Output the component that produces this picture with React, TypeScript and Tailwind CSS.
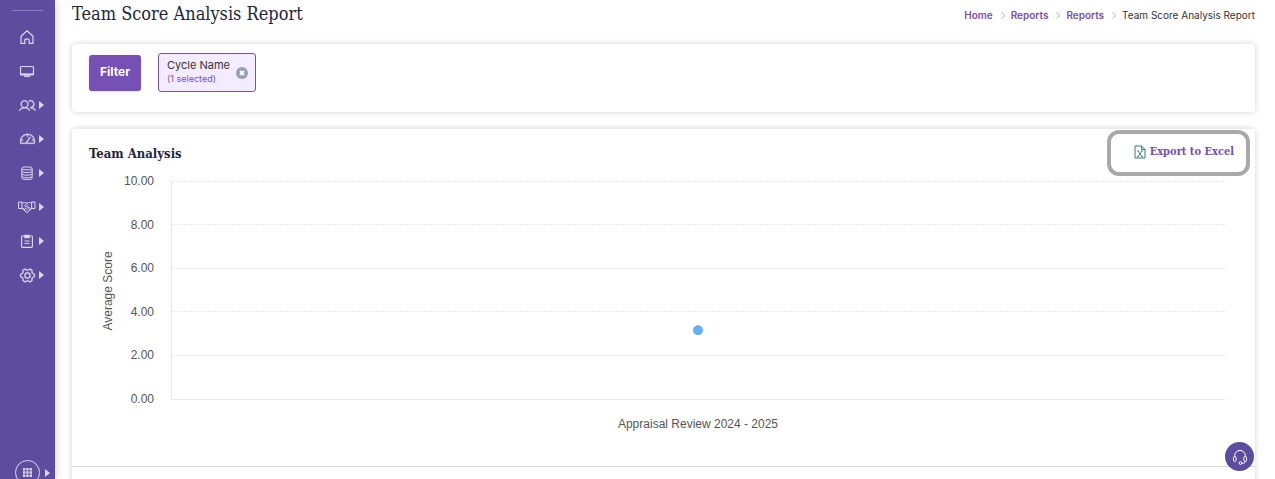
import { PiGauge, PiGearSix, PiUsers } from "react-icons/pi";
import type { ReactNode } from "react";

const slab = "font-['DejaVu_Serif_Condensed','DejaVu_Serif',serif]";
const sans = "font-['Inter',sans-serif]";

function HomeIcon() {
  return (
    <svg viewBox="0 0 16 16" className="size-4" fill="none" stroke="currentColor" strokeWidth="1.2" strokeLinejoin="round">
      <path d="M2 7.2L8 1.8l6 5.4v7.2H10.2v-3.2a1 1 0 0 0-1-1H6.8a1 1 0 0 0-1 1v3.2H2z" />
    </svg>
  );
}

function MonitorIcon() {
  return (
    <svg viewBox="0 0 16 16" className="size-4" fill="none" stroke="currentColor">
      <rect x="1.5" y="3.5" width="13" height="8.5" rx="0.8" strokeWidth="1.2" />
      <path d="M1.5 11.2h13" strokeWidth="1.6" />
      <path d="M5 13.2h6" strokeWidth="1.4" />
    </svg>
  );
}

function DatabaseIcon() {
  return (
    <svg viewBox="0 0 16 16" className="size-4" fill="none" stroke="currentColor">
      <rect x="2.8" y="2" width="10.4" height="12.4" rx="2" />
      <path d="M3 4c2 1.2 8 1.2 10 0M3 6.6c2 1.3 8 1.3 10 0M3 9.2c2 1.3 8 1.3 10 0M3 11.8c2 1.3 8 1.3 10 0" />
    </svg>
  );
}

function HandshakeIcon() {
  return (
    <svg viewBox="0 0 18 16" className="h-4 w-[18px]" fill="none" stroke="currentColor" strokeLinejoin="round" strokeLinecap="round">
      <path d="M1 3h3v6.5H1zM14 3h3v6.5h-3z" />
      <path d="M4 4c2-.8 3.4-.6 5 .4 1.600-1 3-1.200 5-.4" />
      <path d="M4 9.200l4 3.600q1 .8 2 0l4-3.600" />
      <path d="M9 4.400L6.600 6.800q1.200 1.400 2.800 0l3.400 3.200M7.200 9l2 2M9 8.200l2.200 2.200M5.600 9.400l1.400 1.600" />
    </svg>
  );
}

function ClipboardIcon() {
  return (
    <svg viewBox="0 0 16 16" className="size-4" fill="none" stroke="currentColor">
      <rect x="2.6" y="3" width="10.8" height="11.4" rx="0.8" strokeWidth="1.2" />
      <path d="M5.2 1.8h5.6v3.4H5.200z" fill="currentColor" stroke="none" />
      <path d="M5.5 8h5M5.5 10.400h5" />
    </svg>
  );
}

function HeadsetIcon() {
  return (
    <svg viewBox="0 0 16 16" className="size-4" fill="none" stroke="currentColor">
      <path d="M2.600 8V6.800a5.400 5.400 0 0 1 10.800 0V8" />
      <rect x="1.500" y="7.500" width="2.600" height="5" rx="1.200" />
      <rect x="11.900" y="7.500" width="2.600" height="5" rx="1.200" />
      <path d="M13.400 12.500c0 1.300-1.400 1.800-3.400 1.800" />
      <circle cx="8.500" cy="14" r="1.400" />
    </svg>
  );
}

function Caret() {
  return (
    <svg viewBox="0 0 5 8" className="h-2 w-[5px]" fill="currentColor">
      <path d="M0 0l5 4-5 4z" />
    </svg>
  );
}

function ExcelIcon() {
  return (
    <svg viewBox="0 0 12 14" className="h-[14px] w-3" fill="none" stroke="#2f8068">
      <path d="M1 1h6.5L11 4.5V13H1z" />
      <path d="M7.5 1v3.5H11" />
      <path d="M4 6l4 5.5M8 6l-4 5.5M3.2 6h1.6M7.2 6h1.6M3.2 11.5h1.6M7.2 11.5h1.6" strokeWidth="0.9" />
    </svg>
  );
}

interface NavItem {
  label: string;
  icon: ReactNode;
  hasMenu: boolean;
}

const navItems: NavItem[] = [
  { label: "Home", icon: <HomeIcon />, hasMenu: false },
  { label: "Desk", icon: <MonitorIcon />, hasMenu: false },
  { label: "People", icon: <PiUsers className="size-[17px]" strokeWidth={4} />, hasMenu: true },
  { label: "Dashboard", icon: <PiGauge className="size-[17px]" strokeWidth={4} />, hasMenu: true },
  { label: "Data", icon: <DatabaseIcon />, hasMenu: true },
  { label: "Engagement", icon: <HandshakeIcon />, hasMenu: true },
  { label: "Reviews", icon: <ClipboardIcon />, hasMenu: true },
  { label: "Settings", icon: <PiGearSix className="size-[17px]" strokeWidth={4} />, hasMenu: true },
];

function Sidebar() {
  return (
    <aside className="flex w-[55px] shrink-0 flex-col bg-[#5c4d9f] text-[#dcd7ed] shadow-[2px_0_8px_rgba(0,0,0,0.15)]">
      <div className="mx-3 mt-[10px] mb-[9px] border-t border-[#8b7fbf]" />
      <nav className="flex flex-col">
        {navItems.map((item) => (
          <a
            key={item.label}
            href="#"
            aria-label={item.label}
            className="flex h-[34px] items-center gap-[3px] pl-[18px]"
          >
            <span className="flex w-[18px] justify-center">{item.icon}</span>
            {item.hasMenu && <Caret />}
          </a>
        ))}
      </nav>
      <button
        type="button"
        aria-label="All apps"
        className="mt-auto -mb-[6px] flex items-center gap-[5px] pl-[15px]"
      >
        <span className="flex size-[25px] shrink-0 items-center justify-center rounded-full border border-[#dcd7ed]">
          <svg viewBox="0 0 9 9" className="size-[9px]" fill="currentColor">
            <path d="M0 0h2.4v2.4H0zM3.3 0h2.4v2.4H3.3zM6.6 0H9v2.4H6.6zM0 3.3h2.4v2.4H0zM3.3 3.3h2.4v2.4H3.3zM6.6 3.3H9v2.4H6.6zM0 6.6h2.4V9H0zM3.3 6.6h2.4V9H3.3zM6.6 6.6H9V9H6.6z" />
          </svg>
        </span>
        <Caret />
      </button>
    </aside>
  );
}

const crumbs = ["Home", "Reports", "Reports"];

function Breadcrumbs() {
  return (
    <nav aria-label="Breadcrumb" className="text-[10px] leading-4">
      <ol className="flex items-center">
        {crumbs.map((crumb, i) => (
          <li key={i} className="flex items-center">
            <a href="#" className="font-semibold text-[#7650b5]">
              {crumb}
            </a>
            <svg viewBox="0 0 5 7" className="mr-[5px] ml-2 h-[7px] w-[5px]" fill="none" stroke="#b5b5b5">
              <path d="M0.5 0.5L4 3.5 0.5 6.500" />
            </svg>
          </li>
        ))}
        <li className="text-[#333]">Team Score Analysis Report</li>
      </ol>
    </nav>
  );
}

function FilterCard() {
  return (
    <section className="flex h-[68px] items-start gap-[17px] rounded bg-white px-[17px] pt-[9px] shadow-[0_0_6px_rgba(0,0,0,0.18)]">
      <button
        type="button"
        className="mt-[2px] h-9 rounded-[3px] bg-[#7650b5] px-[11px] pb-[2px] text-xs font-bold text-white shadow-sm"
      >
        Filter
      </button>
      <div className="flex h-[39px] items-center gap-[6px] rounded-[3px] border border-[#7650b5] bg-[#f3ebff] pr-[7px] pl-2">
        <div className="pb-[2px]">
          <p className="text-[11px] leading-[14px] text-[#333]">Cycle Name</p>
          <p className="text-[9px] leading-[13px] text-[#7650b5]">(1 selected)</p>
        </div>
        <button type="button" aria-label="Clear cycle name">
          <svg viewBox="0 0 12 12" className="size-3">
            <circle cx="6" cy="6" r="6" fill="#93a1b0" />
            <path d="M4 4l4 4M8 4l-4 4" stroke="#fff" strokeWidth="1.8" />
          </svg>
        </button>
      </div>
    </section>
  );
}

const ticks = [10, 8, 6, 4, 2, 0];
const plotHeight = 218;
const rowGap = plotHeight / (ticks.length - 1);
const score = 3.15;

function ScoreChart() {
  return (
    <div className={"flex h-[270px] font-['Liberation_Sans',sans-serif] text-xs"}>
      <svg className="h-full w-[82px] shrink-0 overflow-visible" fill="#555">
        <text x="23" y="123" textAnchor="middle" transform="rotate(-90 23 123)">
          Average Score
        </text>
        {ticks.map((tick, i) => (
          <text key={tick} x="65" y={Math.round(17 + i * rowGap)} textAnchor="end">
            {tick.toFixed(2)}
          </text>
        ))}
      </svg>
      <svg className="h-full min-w-0 flex-1 overflow-visible">
        {ticks.slice(0, 5).map((tick, i) => {
          const y = Math.floor(14 + i * rowGap) - 0.5;
          return (
            <line key={tick} x1="0" x2="100%" y1={y} y2={y} stroke="#ececec" strokeDasharray="4 2" />
          );
        })}
        <line x1="0.5" x2="0.5" y1="13" y2="232" stroke="#e6e6f2" />
        <line x1="0" x2="100%" y1="231.5" y2="231.5" stroke="#e6e6f2" />
        <circle cx="50%" cy={plotHeight + 13 - (score / 10) * plotHeight} r="5" fill="#64b0f8" />
        <text x="50%" y="260" textAnchor="middle" fill="#555">
          Appraisal Review 2024 - 2025
        </text>
      </svg>
    </div>
  );
}

function AnalysisCard() {
  return (
    <section className="min-h-[360px] rounded-t bg-white shadow-[0_0_6px_rgba(0,0,0,0.18)]">
      <div className="flex items-start justify-between pt-px pr-[5px] pl-[17px]">
        <h2 className={`${slab} mt-[14px] text-[13px] leading-5 font-bold text-[#22263d]`}>
          Team Analysis
        </h2>
        <button
          type="button"
          className={`${slab} flex h-[46px] items-center gap-1 rounded-xl border-4 border-[#a9a9a9] pr-3 pb-[2px] pl-[23px] text-[11px] font-bold text-[#7650b5]`}
        >
          <ExcelIcon />
          Export to Excel
        </button>
      </div>
      <div className="-mt-[8px] border-b border-[#d9d9d9] pr-[30px] pb-7 pl-[17px]">
        <ScoreChart />
      </div>
    </section>
  );
}

export default function App() {
  return (
    <div className={`${sans} relative flex h-screen overflow-hidden bg-white`}>
      <Sidebar />
      <main className="min-w-0 flex-1 pr-5 pl-[17px]">
        <header className="flex h-11 items-start justify-between">
          <h1 className={`${slab} pt-[2px] text-lg leading-6 text-[#22263d]`}>
            Team Score Analysis Report
          </h1>
          <div className="pt-[7px]">
            <Breadcrumbs />
          </div>
        </header>
        <div className="flex flex-col gap-[17px]">
          <FilterCard />
          <AnalysisCard />
        </div>
      </main>
      <button
        type="button"
        aria-label="Support"
        className="absolute right-[21px] bottom-2 flex size-[29px] items-center justify-center rounded-full bg-[#5c4d9f] text-white"
      >
        <HeadsetIcon />
      </button>
    </div>
  );
}
